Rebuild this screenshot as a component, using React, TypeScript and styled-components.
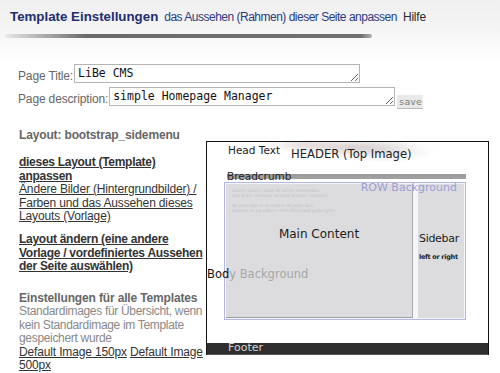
import React from "react";
import styled, {createGlobalStyle} from "styled-components";

const GlobalStyle = createGlobalStyle`
    html, body {
        margin: 0;
        padding: 0;
        background: #fff;
        font-family: "Liberation Sans", Arial, sans-serif;
    }
`;

const Page = styled.div`
    width: 500px;
    height: 373px;
    overflow: hidden;
    background: linear-gradient(#efefef 0, #f6f6f6 35px, #fff 62px);
`;

const TitleBar = styled.div`
    display: flex;
    align-items: baseline;
    gap: 6px;
    padding: 9px 0 0 10px;
    white-space: nowrap;
`;
const Title = styled.span`
    font-size: 13.3px;
    font-weight: bold;
    color: #1f2d6e;
`;
const SubTitle = styled.span`
    font-size: 12px;
    color: ${p => p.$dark ? "#2a2a2a" : "#2b3a82"};
    letter-spacing: ${p => p.$dark ? "-0.2px" : "-0.5px"};
`;
const Rule = styled.div`
    width: 367px;
    height: 4px;
    margin: 10px 0 0 5px;
    border-radius: 2px;
    background: linear-gradient(to right, rgba(110, 110, 110, 0.1), #6a6a6a 22%, #707070 97%, rgba(110, 110, 110, 0.5));
    filter: blur(0.6px);
`;

const Form = styled.div`
    display: flex;
    flex-direction: column;
    gap: 4px;
    padding: 26px 0 0 18px;
`;
const FieldRow = styled.div`
    display: flex;
    align-items: flex-end;
    gap: 1px;
`;
const Label = styled.label`
    font-size: 12px;
    color: #666;
    line-height: 14px;
    letter-spacing: -0.15px;
`;
const Field = styled.textarea`
    box-sizing: border-box;
    width: 286px;
    height: 19px;
    margin: 0;
    padding: 0 3px;
    border: 1px solid #b5b5b5;
    font-family: "DejaVu Sans Mono", monospace;
    font-size: 11.5px;
    line-height: 16px;
    color: #111;
    overflow: hidden;
    background: #fff;
`;
const SaveButton = styled.button`
    box-sizing: border-box;
    width: 26px;
    height: 14px;
    margin: 0 0 -3px 1px;
    padding: 0;
    border: none;
    border-bottom: 1px solid #bbb;
    background: #e9e9e9;
    color: #7a7a7a;
    font-family: "DejaVu Sans Mono", monospace;
    font-size: 9.5px;
    line-height: 13px;
`;

const Main = styled.div`
    display: flex;
    align-items: flex-start;
    padding: 20px 0 0 19px;
`;
const Column = styled.div`
    width: 187px;
    flex: none;
    margin-top: 3px;
    font-size: 12px;
    line-height: 13.5px;
    white-space: nowrap;
    letter-spacing: -0.15px;
`;
const Block = styled.div`
    margin-top: ${p => p.$gap || 0}px;
`;
const Heading = styled.div`
    font-weight: bold;
    color: #666;
`;
const Text = styled.div`
    color: #888;
    letter-spacing: -0.32px;
`;
const Link = styled.a`
    color: #333;
    text-decoration: underline;
    font-weight: ${p => p.$bold ? "bold" : "normal"};
    letter-spacing: ${p => p.$bold ? "-0.28px" : "-0.15px"};
    cursor: pointer;
`;

const Diagram = styled.div`
    position: relative;
    box-sizing: border-box;
    width: 283px;
    height: 214px;
    margin-top: 15px;
    border: 1px solid #111;
    border-bottom: none;
    background: #fff;
    display: flex;
    flex-direction: column;
    font-family: "DejaVu Sans", Verdana, sans-serif;
`;
const Header = styled.div`
    height: 30px;
    display: flex;
    align-items: flex-start;
    gap: 11px;
    padding-left: 21px;
    background:
        radial-gradient(ellipse 70px 9px at 140px 5px, rgba(150, 115, 115, 0.3), transparent),
        radial-gradient(ellipse 55px 12px at 175px 9px, rgba(140, 140, 140, 0.22), transparent),
        radial-gradient(ellipse 40px 8px at 95px 2px, rgba(170, 150, 150, 0.22), transparent);
`;
const HeadText = styled.span`
    margin-top: 2px;
    font-size: 10.5px;
    color: #222;
`;
const HeaderTitle = styled.span`
    margin-top: 5px;
    font-size: 11.6px;
    color: #222;
`;
const Crumb = styled.div`
    height: 9px;
    margin: 0 0 1px 20px;
    width: 239px;
    background: linear-gradient(transparent 2px, #9c9c9c 2px, #a2a2a2 7px, transparent 7px);
    font-size: 10.5px;
    line-height: 9px;
    color: #222;
`;
const RowBox = styled.div`
    position: relative;
    box-sizing: border-box;
    width: 242px;
    height: 138px;
    margin-left: 17px;
    padding: 1px;
    border: 1px solid #b6b6e2;
    background: #f4f4fb;
    display: flex;
    gap: 5px;
`;
const MainArea = styled.div`
    flex: none;
    width: 186px;
    background: #dcdcde;
    border-right: 1px solid #a9a9ad;
    border-bottom: 1px solid #9e9ea6;
    display: flex;
    flex-direction: column;
    align-items: center;
`;
const Faint = styled.div`
    align-self: flex-start;
    margin: 4px 0 0 6px;
    font-size: 4.5px;
    line-height: 5px;
    color: #c2c2c6;
`;
const AreaTitle = styled.div`
    margin-top: ${p => p.$top || 0}px;
    font-size: ${p => p.$size || 12}px;
    font-weight: ${p => p.$bold ? "bold" : "normal"};
    white-space: nowrap;
    letter-spacing: ${p => p.$tight ? "-0.3px" : "0"};
    color: #1c1c1c;
`;
const SideArea = styled.div`
    flex: 1;
    background: #dcdcde;
    padding-left: 1px;
`;
const RowLabel = styled.span`
    position: absolute;
    top: -2px;
    right: 8px;
    font-size: 11px;
    color: #9c9cd6;
`;
const BodyLabel = styled.span`
    position: absolute;
    left: 0;
    top: 125px;
    font-size: 11.5px;
    color: #a6a6a6;
    b {
        font-weight: normal;
        color: #111;
    }
`;
const Footer = styled.div`
    margin-top: auto;
    height: 11px;
    padding-left: 21px;
    background: #2f2f2f;
    border-bottom: 1px solid #555;
    color: #d6d6d6;
    font-size: 11px;
    line-height: 9px;
`;

function App() {
    return (
        <Page>
            <GlobalStyle/>
            <TitleBar>
                <Title>Template Einstellungen</Title>
                <SubTitle>das Aussehen (Rahmen) dieser Seite anpassen</SubTitle>
                <SubTitle $dark>Hilfe</SubTitle>
            </TitleBar>
            <Rule/>
            <Form>
                <FieldRow>
                    <Label>Page Title:</Label>
                    <Field defaultValue="LiBe CMS"/>
                </FieldRow>
                <FieldRow>
                    <Label>Page description:</Label>
                    <Field defaultValue="simple Homepage Manager"/>
                    <SaveButton>save</SaveButton>
                </FieldRow>
            </Form>
            <Main>
                <Column>
                    <Heading>Layout: bootstrap_sidemenu</Heading>
                    <Block $gap={13.5}>
                        <Link $bold>dieses Layout (Template)<br/>anpassen </Link><br/>
                        <Link>Ändere Bilder (Hintergrundbilder) /<br/>Farben und das Aussehen dieses<br/>Layouts (Vorlage)</Link>
                    </Block>
                    <Block $gap={9.5}>
                        <Link $bold>Layout ändern (eine andere<br/>Vorlage / vordefiniertes Aussehen<br/>der Seite auswählen)</Link>
                    </Block>
                    <Block $gap={18}>
                        <Heading>Einstellungen für alle Templates</Heading>
                        <Text>Standardimages für Übersicht, wenn<br/>kein Standardimage im Template<br/>gespeichert wurde</Text>
                        <Link>Default Image 150px</Link> <Link>Default Image<br/>500px</Link>
                    </Block>
                </Column>
                <Diagram>
                    <Header>
                        <HeadText>Head Text</HeadText>
                        <HeaderTitle>HEADER (Top Image)</HeaderTitle>
                    </Header>
                    <Crumb>Breadcrumb</Crumb>
                    <RowBox>
                        <MainArea>
                            <Faint>
                                Lorem ipsum dolor sit amet consetetur<br/>
                                sed diam nonumy eirmod tempor invidunt<br/><br/>
                                At vero eos et accusam et justo duo<br/>
                                dolores et ea rebum stet clita kasd gubergren
                            </Faint>
                            <AreaTitle $top={14}>Main Content</AreaTitle>
                        </MainArea>
                        <SideArea>
                            <AreaTitle $top={48} $size={11} $tight>Sidebar</AreaTitle>
                            <AreaTitle $top={8} $size={6.5} $bold $tight>left or right</AreaTitle>
                        </SideArea>
                        <RowLabel>ROW Background</RowLabel>
                    </RowBox>
                    <BodyLabel><b>Bod</b>y Background</BodyLabel>
                    <Footer>Footer</Footer>
                </Diagram>
            </Main>
        </Page>
    );
}

export default App;
